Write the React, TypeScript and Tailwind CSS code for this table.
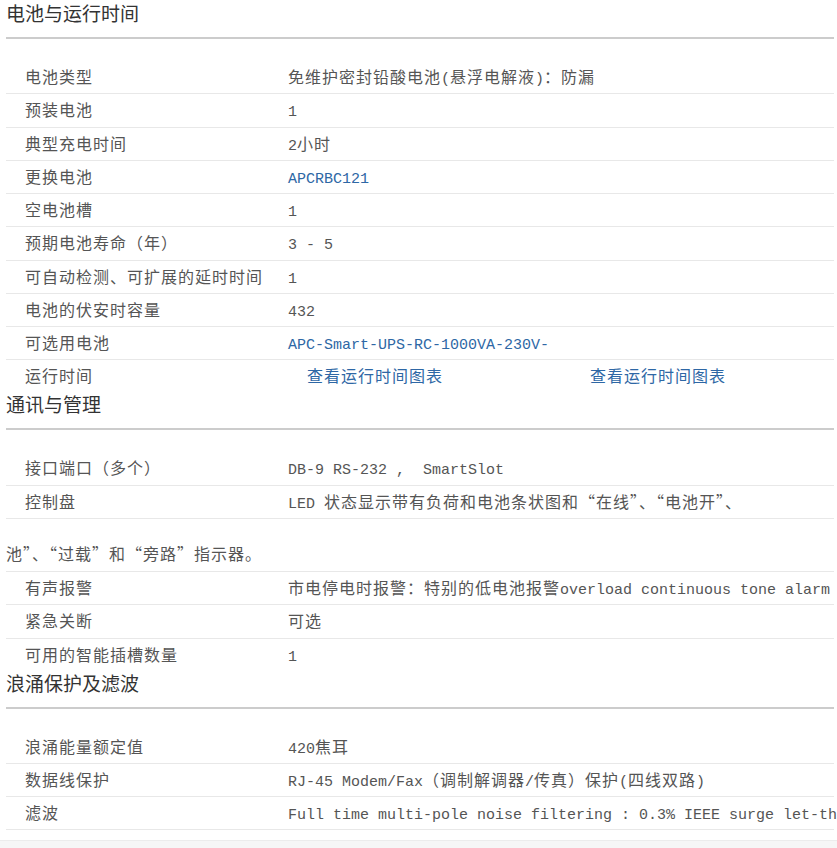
import React from 'react';

type Row = { label: string; value: string; link?: boolean };

const latin = /^[\x20-\x7e]+$/;

// SimSun-like mixing: ASCII runs in a narrow monospace, CJK in Noto
function Mixed({ text }: { text: string }) {
  const parts = text.split(/([\x20-\x7e]+)/).filter((p) => p !== '');
  return (
    <>
      {parts.map((p, i) =>
        latin.test(p) ? (
          <span key={i} className="font-['Liberation_Mono','Noto_Sans_CJK_SC',monospace] text-[15px] tracking-normal">
            {p}
          </span>
        ) : (
          <span key={i}>{p}</span>
        )
      )}
    </>
  );
}

function SpecRow({ label, value, link, last }: Row & { last?: boolean }) {
  return (
    <div
      className={
        last
          ? 'flex h-[31px] items-start leading-[30px]'
          : 'flex h-[33.25px] items-start border-b border-[#e8e8e8] leading-[30px]'
      }
    >
      <div className="w-[282px] shrink-0 whitespace-nowrap pl-[19px] text-[#555]">
        <Mixed text={label} />
      </div>
      <div className={link ? 'whitespace-pre text-[#2e67a5]' : 'whitespace-pre text-[#555]'}>
        <Mixed text={value} />
      </div>
    </div>
  );
}

function SectionHead({ title }: { title: string }) {
  return (
    <>
      <h2 className="h-[28px] whitespace-nowrap font-['Noto_Sans_CJK_SC',sans-serif] text-[19px] leading-[26px] tracking-normal text-[#333]">
        {title}
      </h2>
      <div className="mt-[9px] h-[2px] bg-[#cccccc]" />
    </>
  );
}

const battery: Row[] = [
  { label: '电池类型', value: '免维护密封铅酸电池(悬浮电解液)：防漏' },
  { label: '预装电池', value: '1' },
  { label: '典型充电时间', value: '2小时' },
  { label: '更换电池', value: 'APCRBC121', link: true },
  { label: '空电池槽', value: '1' },
  { label: '预期电池寿命（年）', value: '3 - 5' },
  { label: '可自动检测、可扩展的延时时间', value: '1' },
  { label: '电池的伏安时容量', value: '432' },
  { label: '可选用电池', value: 'APC-Smart-UPS-RC-1000VA-230V-', link: true },
];

const comms: Row[] = [
  { label: '接口端口（多个）', value: 'DB-9 RS-232 ,  SmartSlot' },
  { label: '控制盘', value: 'LED 状态显示带有负荷和电池条状图和“在线”、“电池开”、' },
];

const comms2: Row[] = [
  { label: '有声报警', value: '市电停电时报警：特别的低电池报警overload continuous tone alarm' },
  { label: '紧急关断', value: '可选' },
];

const surge: Row[] = [
  { label: '浪涌能量额定值', value: '420焦耳' },
  { label: '数据线保护', value: 'RJ-45 Modem/Fax（调制解调器/传真）保护(四线双路)' },
  {
    label: '滤波',
    value:
      'Full time multi-pole noise filtering : 0.3% IEEE surge let-through : zero clamping response time : meets UL 1449',
  },
];

export default function App() {
  return (
    <div className="h-[848px] w-[837px] overflow-hidden bg-white font-['Noto_Sans_CJK_SC',sans-serif] text-[16px] tracking-[1px]">
      <div className="mx-[6px] w-[828px]">
        <SectionHead title="电池与运行时间" />
        <div className="pt-[22px]">
          {battery.map((r) => (
            <SpecRow key={r.label} {...r} />
          ))}
          <div className="flex h-[31px] items-start leading-[30px]">
            <div className="w-[282px] shrink-0 pl-[19px] text-[#555]">运行时间</div>
            <div className="flex whitespace-nowrap pl-[19px] text-[#2e67a5]">
              <span className="w-[283px]">查看运行时间图表</span>
              <span>查看运行时间图表</span>
            </div>
          </div>
        </div>

        <SectionHead title="通讯与管理" />
        <div className="pt-[22px]">
          {comms.map((r) => (
            <SpecRow key={r.label} {...r} />
          ))}
          <div className="h-[53.25px] whitespace-nowrap border-b border-[#e8e8e8] pt-[19px] leading-[30px] text-[#555]">
            池”、“过载”和“旁路”指示器。
          </div>
          {comms2.map((r) => (
            <SpecRow key={r.label} {...r} />
          ))}
          <SpecRow label="可用的智能插槽数量" value="1" last />
        </div>

        <SectionHead title="浪涌保护及滤波" />
        <div className="pt-[22px]">
          {surge.map((r) => (
            <SpecRow key={r.label} {...r} />
          ))}
        </div>
      </div>
      <div className="mt-[10px] h-[20px] border-t border-[#ececec] bg-[#f6f6f6]" />
    </div>
  );
}
